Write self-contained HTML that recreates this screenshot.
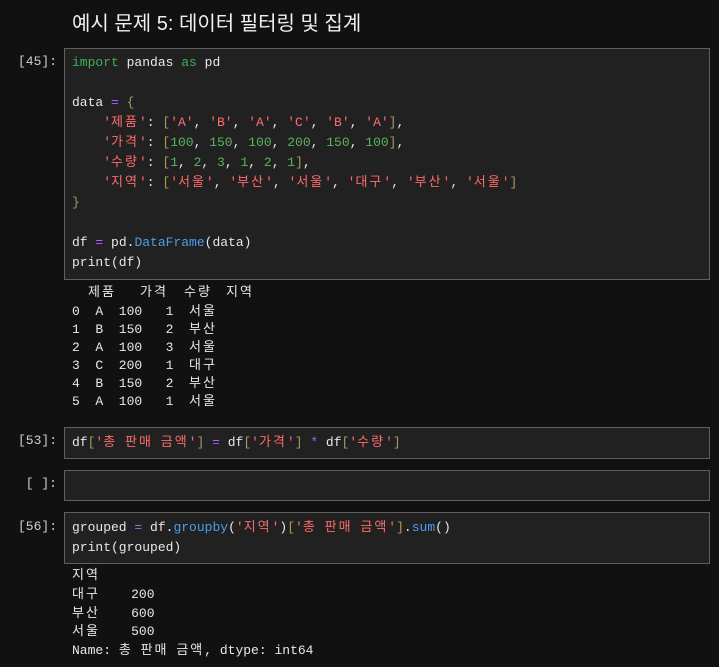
<!DOCTYPE html>
<html><head><meta charset="utf-8"><style>
body{margin:0;background:#111111;width:719px;height:667px;overflow:hidden;position:relative;font-family:"Liberation Mono","Noto Sans CJK KR",monospace;font-size:13px;color:#e8e8e8}
.t{position:absolute;left:72px;top:7px;font-family:"Liberation Sans","Noto Sans CJK KR",sans-serif;font-size:20px;color:#f0f0f0;white-space:nowrap}
.cell{position:absolute;left:64px;width:644px;background:#212121;border:1px solid #5f5f5f}
.p{position:absolute;right:662px;color:#cfcfcf;white-space:pre}
pre{margin:0;font:inherit;white-space:pre;position:absolute;left:7px;line-height:20px}
.o{position:absolute;white-space:pre;line-height:18px}
i{font-style:normal;letter-spacing:2px}
.k{color:#3fae52}.s{color:#ff6b6b}.n{color:#5bb35b}.b{color:#a89a5a}.op{color:#b05cff}.f{color:#4a9ef0}
</style></head><body>
<div class="t">예시 문제 5: 데이터 필터링 및 집계</div>

<div class="p" style="top:54px">[45]:</div>
<div class="cell" style="top:48px;height:230px">
<pre style="top:4px"><span class="k">import</span> pandas <span class="k">as</span> pd

data <span class="op">=</span> <span class="b">{</span>
    <span class="s">'<i>제품</i>'</span>: <span class="b">[</span><span class="s">'A'</span>, <span class="s">'B'</span>, <span class="s">'A'</span>, <span class="s">'C'</span>, <span class="s">'B'</span>, <span class="s">'A'</span><span class="b">]</span>,
    <span class="s">'<i>가격</i>'</span>: <span class="b">[</span><span class="n">100</span>, <span class="n">150</span>, <span class="n">100</span>, <span class="n">200</span>, <span class="n">150</span>, <span class="n">100</span><span class="b">]</span>,
    <span class="s">'<i>수량</i>'</span>: <span class="b">[</span><span class="n">1</span>, <span class="n">2</span>, <span class="n">3</span>, <span class="n">1</span>, <span class="n">2</span>, <span class="n">1</span><span class="b">]</span>,
    <span class="s">'<i>지역</i>'</span>: <span class="b">[</span><span class="s">'<i>서울</i>'</span>, <span class="s">'<i>부산</i>'</span>, <span class="s">'<i>서울</i>'</span>, <span class="s">'<i>대구</i>'</span>, <span class="s">'<i>부산</i>'</span>, <span class="s">'<i>서울</i>'</span><span class="b">]</span>
<span class="b">}</span>

df <span class="op">=</span> pd.<span class="f">DataFrame</span>(data)
print(df)</pre></div>

<div class="o" style="left:88px;top:284px"><i>제품</i></div><div class="o" style="left:140px;top:284px"><i>가격</i></div><div class="o" style="left:184px;top:284px"><i>수량</i></div><div class="o" style="left:226px;top:284px"><i>지역</i></div>
<div class="o" style="left:72px;top:303px">0  A  100   1  <i>서울</i>
1  B  150   2  <i>부산</i>
2  A  100   3  <i>서울</i>
3  C  200   1  <i>대구</i>
4  B  150   2  <i>부산</i>
5  A  100   1  <i>서울</i></div>

<div class="p" style="top:433px">[53]:</div>
<div class="cell" style="top:427px;height:30px"><pre style="top:5px">df<span class="b">[</span><span class="s">'<i>총</i> <i>판매</i> <i>금액</i>'</span><span class="b">]</span> <span class="op">=</span> df<span class="b">[</span><span class="s">'<i>가격</i>'</span><span class="b">]</span> <span class="op">*</span> df<span class="b">[</span><span class="s">'<i>수량</i>'</span><span class="b">]</span></pre></div>

<div class="p" style="top:476px">[ ]:</div>
<div class="cell" style="top:470px;height:29px"></div>

<div class="p" style="top:519px">[56]:</div>
<div class="cell" style="top:512px;height:50px"><pre style="top:5px">grouped <span class="op">=</span> df.<span class="f">groupby</span>(<span class="s">'<i>지역</i>'</span>)<span class="b">[</span><span class="s">'<i>총</i> <i>판매</i> <i>금액</i>'</span><span class="b">]</span>.<span class="f">sum</span>()
print(grouped)</pre></div>

<div class="o" style="left:72px;top:567px;line-height:18.8px"><i>지역</i>
<i>대구</i>    200
<i>부산</i>    600
<i>서울</i>    500
Name: <i>총</i> <i>판매</i> <i>금액</i>, dtype: int64</div>
</body></html>
